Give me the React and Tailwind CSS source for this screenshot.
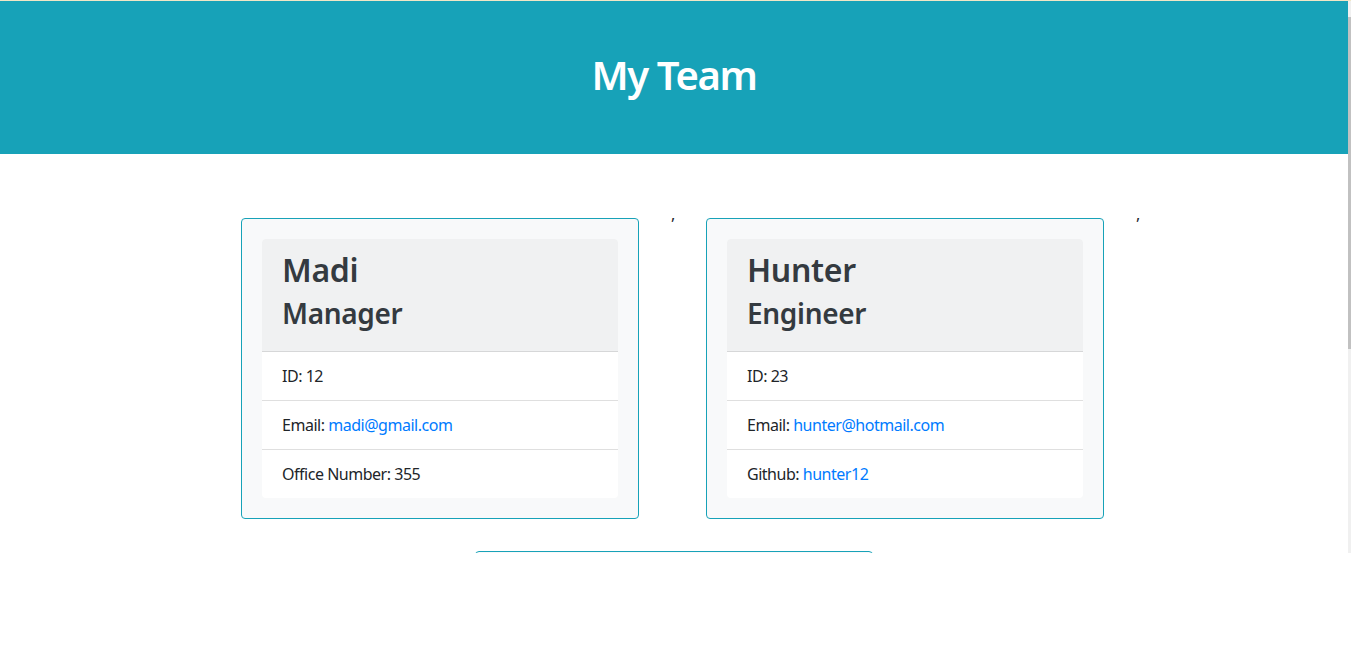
import React from 'react';

const team = [
  { name: 'Madi', role: 'Manager', id: 12, email: 'madi@gmail.com', extra: { label: 'Office Number', value: '355' } },
  { name: 'Hunter', role: 'Engineer', id: 23, email: 'hunter@hotmail.com', extra: { label: 'Github', value: 'hunter12', link: true } },
  { name: 'Sam', role: 'Intern', id: 34, email: 'sam@yahoo.com', extra: { label: 'School', value: 'UCLA' } },
];

const Card = ({ member }) => (
  <div className="mx-8 my-4 w-[398px] rounded-[4px] border border-[#17a2b8] bg-[#f8f9fa] p-5">
    <div className="overflow-hidden rounded-[4px] bg-white">
      <div className="border-b border-[#d6d7d8] bg-[#f0f1f2] px-5 py-3 text-[#343a40] tracking-[-0.02em]">
        <h2 className="mb-2 text-[32px] font-semibold leading-[38.4px]">{member.name}</h2>
        <h3 className="mb-2 text-[28px] font-semibold leading-[33.6px]">{member.role}</h3>
      </div>
      <ul className="text-base leading-6 text-[#212529] tracking-[-0.03em]">
        <li className="border-b border-[#dfdfdf] px-5 py-3">ID: {member.id}</li>
        <li className="border-b border-[#dfdfdf] px-5 py-3">
          Email: <a href="#" className="text-[#007bff]">{member.email}</a>
        </li>
        <li className="px-5 py-3">
          {member.extra.label}:{' '}
          {member.extra.link ? (
            <a href="#" className="text-[#007bff]">{member.extra.value}</a>
          ) : (
            member.extra.value
          )}
        </li>
      </ul>
    </div>
  </div>
);

export default function App() {
  return (
    <div className="h-[648px] bg-white font-['Segoe_UI','Noto_Sans',sans-serif]">
      <div className="h-px bg-[#f1e6c6]" />
      <div className="flex h-[552px]">
        <div className="flex-1 overflow-hidden">
          <header className="flex h-[153px] items-center justify-center bg-[#17a2b8] pb-[6px]">
            <h1 className="text-[40px] font-semibold leading-[48px] tracking-[-0.035em] text-white">My Team</h1>
          </header>
          <main className="mx-auto mt-12 flex max-w-[1140px] flex-wrap justify-center px-[15px] text-base leading-6 text-[#212529]">
            {team.map((m, i) => (
              <React.Fragment key={m.id}>
                <Card member={m} />
                {i < team.length - 1 && <span className="w-[3px]">,</span>}
              </React.Fragment>
            ))}
          </main>
        </div>
        <div className="w-[3px] bg-[#f0f0f0]">
          <div className="mt-4 h-[332px] bg-[#c1c1c1]" />
        </div>
      </div>
    </div>
  );
}
